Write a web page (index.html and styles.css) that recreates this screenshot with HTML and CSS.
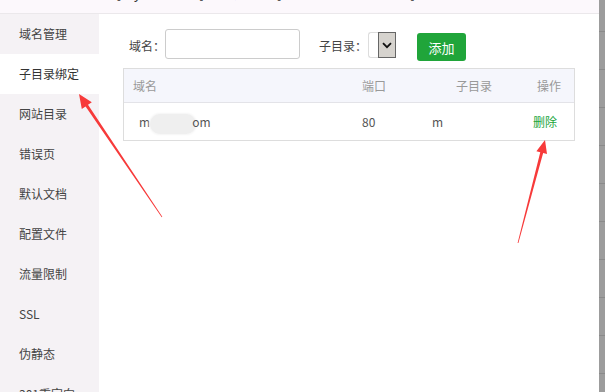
FILE: index.html
```html
<!DOCTYPE html>
<html lang="zh-CN">
<head>
  <meta charset="UTF-8" />
  <title>站点修改</title>
  <link rel="stylesheet" href="styles.css">
</head>
<body>
  <div class="page">
    <div class="dialog">
      <div class="dialog-title">
        <span class="title-text">站点修改[my.site.com] -- 添加时间[2019-05-10 14:22:31]</span>
      </div>

      <div class="dialog-body">
        <ul class="side-menu">
          <li>域名管理</li>
          <li class="active">子目录绑定</li>
          <li>网站目录</li>
          <li>错误页</li>
          <li>默认文档</li>
          <li>配置文件</li>
          <li>流量限制</li>
          <li>SSL</li>
          <li>伪静态</li>
          <li>301重定向</li>
        </ul>

        <div class="content">
          <div class="bind-form">
            <span class="form-label">域名：</span>
            <div class="text-input"></div>
            <span class="form-label label-dir">子目录：</span>
            <div class="fake-select">
              <span class="select-box"></span>
              <span class="select-arrow">
                <svg width="10" height="7" viewBox="0 0 10 7"><path d="M1 1.2 L5 5.2 L9 1.2" fill="none" stroke="#111" stroke-width="1.8"/></svg>
              </span>
            </div>
            <button class="btn-add">添加</button>
          </div>

          <div class="bind-table">
            <div class="row head">
              <span>域名</span>
              <span>端口</span>
              <span class="col-dir">子目录</span>
              <span class="col-op">操作</span>
            </div>
            <div class="row">
              <span class="col-domain">m<i class="blur-mask"></i>om</span>
              <span>80</span>
              <span>m</span>
              <span class="col-op"><a class="link-del">删除</a></span>
            </div>
          </div>
        </div>
      </div>
    </div>
    <div class="backdrop-strip"></div>
  </div>

  <!-- annotation arrows drawn over the screenshot -->
  <svg class="arrows" width="605" height="392" viewBox="0 0 605 392">
    <polygon fill="#f73a3a" points="162.3,216.8 88,104.8 91.8,102.2 79,94 81.8,109 85.6,106.4 161.7,217.2"/>
    <polygon fill="#f73a3a" points="518.4,243.1 543.15,152.98 547,154 545,140 536.4,151.2 540.25,152.22 517.6,242.9"/>
  </svg>
</body>
</html>
```

FILE: styles.css
```css
html, body {
  margin: 0;
  padding: 0;
}

body {
  font-family: "Noto Sans CJK SC", "Open Sans", sans-serif;
  font-size: 12px;
  color: #555;
  background: #fff;
  width: 605px;
  height: 392px;
  overflow: hidden;
  position: relative;
}

.page {
  display: flex;
  height: 392px;
}

.dialog {
  flex: 1;
  display: flex;
  flex-direction: column;
  min-width: 0;
}

.dialog-title {
  height: 13px;
  background: #fcf8fc;
  border-bottom: 1px solid #ebe8eb;
  overflow: hidden;
  padding-left: 60px;
}

.title-text {
  display: block;
  font-size: 14px;
  line-height: 14px;
  margin-top: -15px;
  color: #333;
  white-space: nowrap;
}

.dialog-body {
  flex: 1;
  display: flex;
  min-height: 0;
}

/* left menu */
.side-menu {
  list-style: none;
  margin: 0;
  padding: 0;
  width: 99px;
  background: #f5f2f5;
  overflow: hidden;
}

.side-menu li {
  height: 40px;
  line-height: 40px;
  padding-left: 19px;
  color: #444;
  white-space: nowrap;
}

.side-menu li.active {
  background: #fff;
  color: #333;
}

/* right panel */
.content {
  flex: 1;
  padding: 15px 24px 0 24px;
}

.bind-form {
  display: flex;
  align-items: flex-start;
  padding-left: 6px;
  height: 39px;
}

.form-label {
  line-height: 30px;
  margin-top: 2px;
  color: #444;
  white-space: nowrap;
}

.label-dir {
  margin-left: 19px;
}

.text-input {
  width: 133px;
  height: 28px;
  border: 1px solid #ccc;
  border-radius: 3px;
  background: #fff;
}

.fake-select {
  display: flex;
  margin-top: 3px;
  margin-left: 1px;
  height: 26px;
}

.select-box {
  width: 9px;
  border: 1px solid #ddd;
  border-right: none;
  border-radius: 3px 0 0 3px;
}

.select-arrow {
  width: 16px;
  background: #d6d3ce;
  border: 1px solid #666;
  display: flex;
  align-items: center;
  justify-content: center;
}

.btn-add {
  margin-top: 4px;
  margin-left: 21px;
  width: 49px;
  height: 28px;
  background: #20a53a;
  color: #fff;
  border: none;
  border-radius: 3px;
  font-family: inherit;
  font-size: 13px;
  padding: 0;
}

/* table */
.bind-table {
  border: 1px solid #ddd;
}

.row {
  display: grid;
  grid-template-columns: 238px 70px 1fr 64px;
  height: 37px;
  line-height: 37px;
  color: #555;
  white-space: nowrap;
}

.row.head {
  height: 33px;
  line-height: 33px;
  background: #f5f6fc;
  border-bottom: 1px solid #e3e3e8;
  color: #999;
}

.row span:first-child {
  padding-left: 9px;
}

.row .col-domain {
  padding-left: 15px !important;
}

.col-dir {
  padding-left: 24px;
}

.col-op {
  text-align: right;
  padding-right: 13px;
}

.row:not(.head) .col-op {
  padding-right: 17px;
}

.link-del {
  color: #20a53a;
}

.blur-mask {
  display: inline-block;
  width: 46px;
  height: 20px;
  vertical-align: middle;
  margin: 0 -4px 0 0;
  border-radius: 10px;
  background: #efefef;
  box-shadow: 0 0 2px 1px #f5f5f5;
}

/* page behind the dialog */
.backdrop-strip {
  width: 6px;
  background: repeating-linear-gradient(to bottom, #9c9c9c 0, #9c9c9c 37px, #8a8a8a 37px, #8a8a8a 38px);
  background-position: 0 -6px;
}

.arrows {
  position: absolute;
  left: 0;
  top: 0;
  pointer-events: none;
}
```
